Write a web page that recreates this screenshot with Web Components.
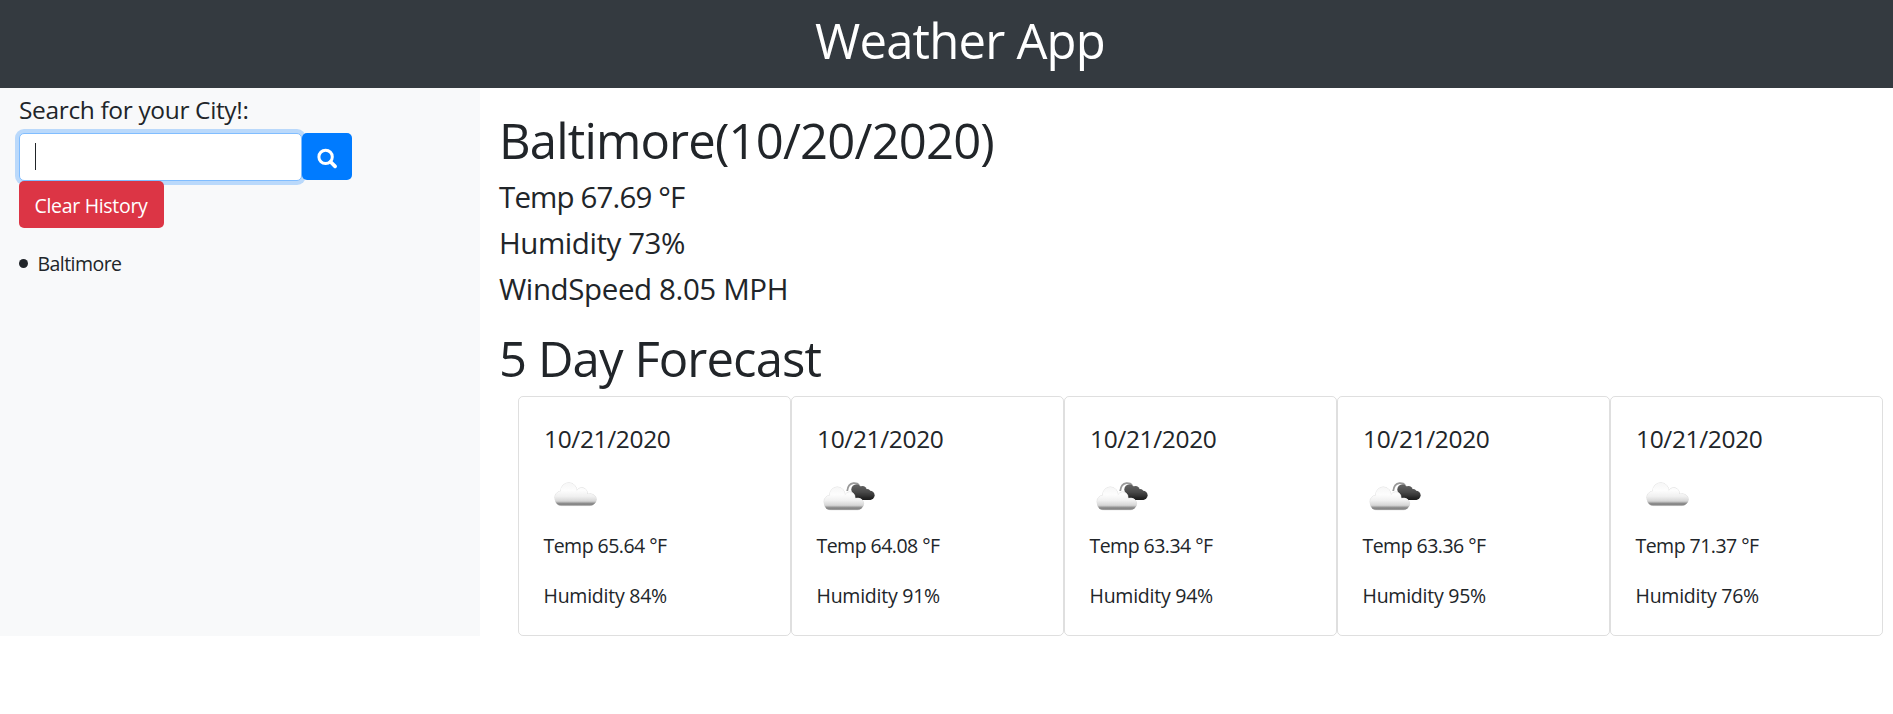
<!DOCTYPE html>
<html lang="en"><head><meta charset="utf-8"><title>Weather App</title>
<style>
body{margin:0;background:#fff;color:#212529;font-family:"Open Sans","Noto Sans",sans-serif}
</style></head><body>
<weather-app></weather-app>
<script>
// Single line of text whose tracking is adjusted to fill a given advance width.
class FitText extends HTMLElement{
  constructor(){super();this.attachShadow({mode:'open'}).innerHTML=`<style>:host{display:block;white-space:nowrap}span{display:inline-block}</style><span><slot></slot></span>`}
  connectedCallback(){
    const w=+this.getAttribute('w'),s=this.shadowRoot.querySelector('span');
    const n=this.textContent.length;
    s.style.letterSpacing=((w-s.getBoundingClientRect().width)/n)+'px';
  }
}
class AppHeader extends HTMLElement{
  constructor(){super();this.attachShadow({mode:'open'}).innerHTML=`<style>
  :host{display:block;box-sizing:border-box;height:88px;padding:10px 0 0 815px;background:#343a40;color:#fff;font-size:49px;line-height:60px}
  </style><fit-text w="290">Weather App</fit-text>`}
}
class SearchPanel extends HTMLElement{
  constructor(){super();this.attachShadow({mode:'open'}).innerHTML=`<style>
  :host{display:block;box-sizing:border-box;width:480px;padding:7px 19px 0;background:#f8f9fa}
  .label{font-size:24.5px;line-height:30px;margin-bottom:8px}
  .row{display:flex;align-items:flex-start}
  .input{box-sizing:border-box;width:283px;height:48px;border:1px solid #80bdff;border-radius:5px;background:#fff;box-shadow:0 0 0 4px rgba(0,123,255,.25);padding:9px 15px}
  .caret{width:1px;height:27px;background:#212529}
  .go{width:50px;height:47px;border-radius:5px;background:#007bff;position:relative}
  .go svg{display:block}
  .clear{position:relative;box-sizing:border-box;width:145px;height:47px;border-radius:5px;background:#dc3545;color:#fff;font-size:19.5px;line-height:30px;padding:10px 0 0 15.500px}
  .hist{display:flex;align-items:center;gap:9.500px;margin-top:21px;font-size:19.5px;line-height:30px}
  .dot{width:9px;height:9px;border-radius:50%;background:#212529;margin-top:-1px}
  </style>
  <fit-text class="label" w="229.5">Search for your City!:</fit-text>
  <div class="row"><div class="input"><div class="caret"></div></div>
  <div class="go"><svg width="50" height="47" viewBox="0 0 50 47" fill="none" stroke="#fff"><circle cx="23.6" cy="23.9" r="6.7" stroke-width="3"/><path d="M28.7 29l4.400 4.400" stroke-width="3.7" stroke-linecap="round"/></svg></div></div>
  <div class="clear"><fit-text w="113">Clear History</fit-text></div>
  <div class="hist"><i class="dot"></i><fit-text w="84">Baltimore</fit-text></div>`}
}
// Light cloud, 42.5 x 24, built from overlapping lobes.
const LOBES='<circle cx="14.500" cy="8.500" r="8"/><circle cx="7" cy="15.500" r="6.500"/><circle cx="27.500" cy="11" r="5.500"/><circle cx="36.500" cy="17.500" r="5.500"/><rect x="1" y="12" width="40.500" height="11.800" rx="5.900"/><rect x="9" y="9" width="23" height="14"/>';
const cloud=t=>`<g transform="${t}"><g fill="#dcdcdc" stroke="#dcdcdc" stroke-width=".8">${LOBES}</g><g fill="url(#g)">${LOBES}</g></g>`;
class WeatherIcon extends HTMLElement{
  connectedCallback(){
    const broken=this.getAttribute('kind')==='broken';
    this.attachShadow({mode:'open'}).innerHTML=`<style>:host{display:block;height:77px}svg{display:block}</style>
    <svg width="62" height="77" viewBox="0 0 62 77"><defs>
    <linearGradient id="g" gradientUnits="userSpaceOnUse" x1="0" y1="0" x2="0" y2="24"><stop offset="0" stop-color="#f6f6f6"/><stop offset=".35" stop-color="#fdfdfd"/><stop offset=".6" stop-color="#f0f0f0"/><stop offset=".8" stop-color="#d6d6d6"/><stop offset=".9" stop-color="#8c8c8c"/><stop offset="1" stop-color="#808080"/></linearGradient>
    <linearGradient id="d" gradientUnits="userSpaceOnUse" x1="0" y1="30" x2="0" y2="46"><stop offset="0" stop-color="#666"/><stop offset=".5" stop-color="#4a4a4a"/><stop offset="1" stop-color="#181818"/></linearGradient>
    <filter id="b" x="-10%" y="-10%" width="120%" height="120%"><feGaussianBlur stdDeviation=".5"/></filter></defs>
    <g filter="url(#b)">${broken?`<path d="M30.200 37Q31 30 36.500 29.200Q40.500 29 42 31" fill="none" stroke="#999" stroke-width="1.800"/>
    <g fill="url(#d)"><circle cx="39.500" cy="35.500" r="5.200"/><circle cx="45.500" cy="36.300" r="4.200"/><circle cx="53" cy="41.300" r="4.600"/><circle cx="50" cy="38.500" r="3.500"/><rect x="36" y="37" width="20" height="9" rx="4.500"/></g>${cloud('translate(6.500 32.500) scale(.955 .98)')}`:cloud('translate(10.300 28.300) scale(1 .98)')}</g>
    </svg>`;
  }
}
class ForecastCard extends HTMLElement{
  connectedCallback(){
    const a=n=>this.getAttribute(n);
    this.attachShadow({mode:'open'}).innerHTML=`<style>
    :host{display:block;box-sizing:border-box;width:273px;height:240px;border:1px solid rgba(0,0,0,.125);border-radius:5px;padding:27px 24.500px 0;font-size:19.5px;line-height:30px}
    .date{font-size:24.5px;margin-left:.5px}.t{margin-bottom:20px}
    </style><fit-text class="date" w="126.5">${a('date')}</fit-text><weather-icon kind="${a('kind')}"></weather-icon>
    <fit-text class="t" w="123">Temp ${a('temp')} °F</fit-text><fit-text w="123.5">Humidity ${a('humidity')}%</fit-text>`;
  }
}
class CurrentWeather extends HTMLElement{
  constructor(){super();this.attachShadow({mode:'open'}).innerHTML=`<style>
  :host{display:block;font-size:29.5px;line-height:36px}
  .city{font-size:49px;line-height:60px;margin-bottom:9px}
  .m{margin-bottom:10px}
  </style><fit-text class="city" w="495">Baltimore(10/20/2020)</fit-text>
  <fit-text class="m" w="185.5">Temp 67.69 °F</fit-text><fit-text class="m" w="186">Humidity 73%</fit-text><fit-text w="289">WindSpeed 8.05 MPH</fit-text>`}
}
class WeatherApp extends HTMLElement{
  constructor(){super();this.attachShadow({mode:'open'}).innerHTML=`<style>
  :host{display:block}
  .body{display:flex;height:548px}
  main{padding:22px 0 0 19px}
  .h{font-size:49px;line-height:60px;margin:21px 0 8px}
  .cards{display:flex;margin-left:19px}
  </style><app-header></app-header><div class="body"><search-panel></search-panel><main>
  <current-weather></current-weather><fit-text class="h" w="322">5 Day Forecast</fit-text>
  <div class="cards">
  <forecast-card date="10/21/2020" kind="cloud" temp="65.64" humidity="84"></forecast-card>
  <forecast-card date="10/21/2020" kind="broken" temp="64.08" humidity="91"></forecast-card>
  <forecast-card date="10/21/2020" kind="broken" temp="63.34" humidity="94"></forecast-card>
  <forecast-card date="10/21/2020" kind="broken" temp="63.36" humidity="95"></forecast-card>
  <forecast-card date="10/21/2020" kind="cloud" temp="71.37" humidity="76"></forecast-card>
  </div></main></div>`}
}
customElements.define('fit-text',FitText);
customElements.define('app-header',AppHeader);
customElements.define('search-panel',SearchPanel);
customElements.define('weather-icon',WeatherIcon);
customElements.define('forecast-card',ForecastCard);
customElements.define('current-weather',CurrentWeather);
customElements.define('weather-app',WeatherApp);
</script></body></html>
